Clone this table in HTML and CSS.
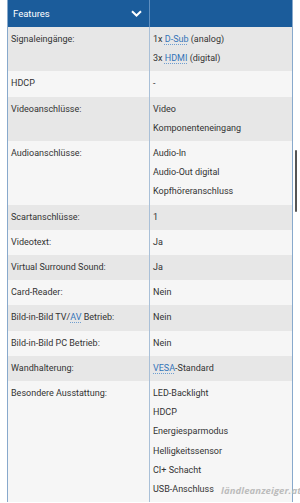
FILE: index.html
```html
<!DOCTYPE html>
<html lang="de">
<head>
<meta charset="utf-8">
<title>Features</title>
<link rel="stylesheet" href="styles.css">
</head>
<body>
<div class="spec">
  <div class="row head">
    <div class="key">
      <span>Features</span>
      <svg class="chev" width="11" height="7" viewBox="0 0 11 7"><path d="M1 1.2 L5.5 5.5 L10 1.2" fill="none" stroke="#fff" stroke-width="2"/></svg>
    </div>
    <div class="val"></div>
  </div>
  <div class="row odd">
    <div class="key">Signaleingänge:</div>
    <div class="val"><div>1x <a class="lnk">D-Sub</a> (analog)</div><div>3x <a class="lnk">HDMI</a> (digital)</div></div>
  </div>
  <div class="row even">
    <div class="key">HDCP</div>
    <div class="val">-</div>
  </div>
  <div class="row odd">
    <div class="key">Videoanschlüsse:</div>
    <div class="val"><div>Video</div><div>Komponenteneingang</div></div>
  </div>
  <div class="row even">
    <div class="key">Audioanschlüsse:</div>
    <div class="val"><div>Audio-In</div><div>Audio-Out digital</div><div>Kopfhöreranschluss</div></div>
  </div>
  <div class="row odd">
    <div class="key">Scartanschlüsse:</div>
    <div class="val">1</div>
  </div>
  <div class="row even">
    <div class="key">Videotext:</div>
    <div class="val">Ja</div>
  </div>
  <div class="row odd">
    <div class="key">Virtual Surround Sound:</div>
    <div class="val">Ja</div>
  </div>
  <div class="row even">
    <div class="key">Card-Reader:</div>
    <div class="val">Nein</div>
  </div>
  <div class="row odd">
    <div class="key">Bild-in-Bild TV/<a class="lnk">AV</a> Betrieb:</div>
    <div class="val">Nein</div>
  </div>
  <div class="row even">
    <div class="key">Bild-in-Bild PC Betrieb:</div>
    <div class="val">Nein</div>
  </div>
  <div class="row odd">
    <div class="key">Wandhalterung:</div>
    <div class="val"><a class="lnk">VESA</a>-Standard</div>
  </div>
  <div class="row even">
    <div class="key">Besondere Ausstattung:</div>
    <div class="val"><div>LED-Backlight</div><div>HDCP</div><div>Energiesparmodus</div><div>Helligkeitssensor</div><div>CI+ Schacht</div><div>USB-Anschluss</div></div>
  </div>
</div>
<div class="scrollthumb"></div>
<div class="mark">ländleanzeiger.at</div>
</body>
</html>
```
FILE: styles.css
```css
html, body {
  margin: 0;
  padding: 0;
  background: #fff;
  overflow: hidden;
}
body {
  width: 300px;
  height: 503px;
  position: relative;
  font-family: Roboto, "Liberation Sans", sans-serif;
  font-size: 9px;
  color: #333;
}
.spec {
  margin-left: 7px;
  width: 286px;
  border-left: 1px solid #88a9cc;
  border-right: 1px solid #88a9cc;
  box-sizing: border-box;
}
.row {
  display: grid;
  grid-template-columns: 141px 1fr;
  line-height: 19.2px;
}
.row .key {
  padding: 3px 3px;
}
.row .val {
  padding: 3px 3px;
  border-left: 1px solid #a9c0d8;
}
.odd { background: #e7e7e7; }
.even { background: #f6f6f6; }
.head {
  background: #1b5c9b;
  color: #fff;
  height: 27px;
}
.head .key {
  display: flex;
  align-items: center;
  justify-content: space-between;
  padding: 0 7px 0 5px;
  font-size: 9.5px;
}
.head .val {
  border-left: 1px solid #5f8fc0;
}
.chev { display: block; margin-top: -1px; }
.lnk {
  color: #3474b8;
  text-decoration: underline dotted #6f9ed0;
  text-underline-offset: 2px;
}
.scrollthumb {
  position: absolute;
  left: 295px;
  top: 150px;
  width: 2px;
  height: 62px;
  background: #555;
  border-radius: 1px;
}
.mark {
  position: absolute;
  left: 221px;
  top: 484px;
  font-family: "Open Sans", "Liberation Sans", sans-serif;
  font-style: italic;
  font-weight: 700;
  font-size: 9.5px;
  color: #bcbcbc;
  letter-spacing: 0.1px;
}
```
